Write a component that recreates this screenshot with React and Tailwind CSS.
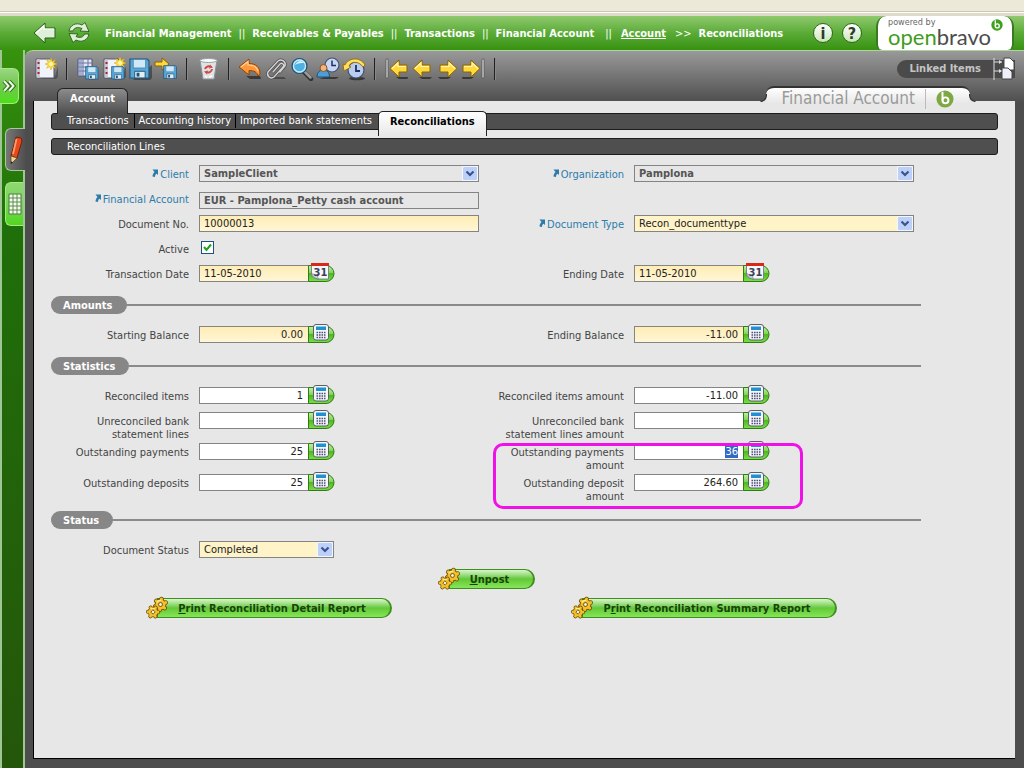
import { useEffect, useRef } from "react";

/* ---------- icons ---------- */

function Floppy({ x = 0, y = 0, s = 1 }) {
  return (
    <g transform={`translate(${x} ${y}) scale(${s})`}>
      <path d="M1 1h18l2 2v18H1z" fill="#58a8d8" stroke="#1f5680" strokeWidth="1.200" />
      <path d="M4.500 1.500h13v9h-13z" fill="#cfe8f7" stroke="#3d7ca6" strokeWidth="0.8" />
      <path d="M6 14h11v7H6z" fill="#e4edf2" stroke="#1f5680" />
      <path d="M8 15.500h3v4H8z" fill="#1f5680" />
    </g>
  );
}

function Sun({ x = 17, y = 7 }) {
  return (
    <g transform={`translate(${x} ${y})`} stroke="#d8a400" strokeWidth="0.5" fill="#ffe04a">
      <path d="M0-6 1.300-2.500 4.300-4.300 2.700-1.200 6 0 2.700 1.200 4.300 4.300 1.300 2.500 0 6-1.300 2.500-4.300 4.300-2.700 1.200-6 0-2.700-1.200-4.300-4.300-1.300-2.500z" />
      <circle r="2" fill="#fff6b0" stroke="none" />
    </g>
  );
}

function Sheet() {
  return (
    <g>
      <path d="M5 22h17l2-2V9l-3 10z" fill="#333" opacity="0.5" />
      <path d="M2 2h14l4 4v15H2z" fill="#f2f4fb" stroke="#555a68" />
      <path d="M4.500 2.500v18" stroke="#c6c9d6" strokeWidth="3" />
      <path d="M4.500 5v2M4.500 10v2M4.500 15v2" stroke="#b0202a" strokeWidth="2" />
    </g>
  );
}

function ArrowLeft({ x = 3 }) {
  return (
    <g transform={`translate(${x} 3)`}>
      <path d="M6 17h13l-2 2H9z" fill="#222" opacity="0.7" />
      <path
        d="M0 8.500 9 0v5h8v7H9v5z"
        fill="#ffd83a"
        stroke="#8d6200"
        strokeLinejoin="round"
      />
      <path d="M2 8.500l6-5.500v3.500h8" fill="none" stroke="#fff6b8" strokeWidth="1.200" />
    </g>
  );
}

const toolbarIcons = {
  new: (
    <>
      <Sheet />
      <Sun />
    </>
  ),
  saveGrid: (
    <>
      <path d="M2 2h14v17H2z" fill="#e3e6f2" stroke="#50577c" />
      <path d="M2 6h14M2 10h14M2 14h14M7 2v17M12 2v17" stroke="#6b73a0" />
      <path d="M2 2h4v17H2z" fill="#7f8ab8" opacity="0.6" />
      <Floppy x={9} y={9} s={0.62} />
    </>
  ),
  saveNew: (
    <>
      <Sheet />
      <Sun x={18} y={6} />
      <Floppy x={9} y={9} s={0.62} />
    </>
  ),
  save: (
    <>
      <path d="M5 23h17l2-2V8z" fill="#222" opacity="0.5" />
      <Floppy x={1} y={1} s={0.95} />
    </>
  ),
  saveNext: (
    <>
      <path d="M1 5h7V1l7 6-7 6V9H1z" fill="#ffd83a" stroke="#8d6200" />
      <Floppy x={9} y={8} s={0.64} />
    </>
  ),
  trash: (
    <>
      <path d="M4 3h17l-3 19H7z" fill="#dfe3e6" stroke="#8d9296" />
      <ellipse cx="12.500" cy="3.500" rx="8.500" ry="2" fill="#f8fafb" stroke="#9aa0a4" />
      <path d="M9 12a4 4 0 0 1 6-2M16 12a4 4 0 0 1-6 3" fill="none" stroke="#cf4b43" strokeWidth="2" />
      <path d="M14 7.500l3 3-4 1zM11 17.500l-3-3 4-1z" fill="#cf4b43" />
      <path d="M9 19l2 1.500M13 20l3-1" stroke="#fff" strokeWidth="1.500" />
    </>
  ),
  undo: (
    <>
      <path d="M8 19h14l1 3H12z" fill="#222" opacity="0.7" />
      <path
        d="M1 10 11 2v4.500c7 0 11 4 11 10l-2 2.500c-1-4-4-5.500-9-5.500V18z"
        fill="#ff9838"
        stroke="#9a4300"
        strokeLinejoin="round"
      />
      <path d="M3 10l7-5.500V8c5 0 9 2 10 6" fill="none" stroke="#ffd0a0" strokeWidth="1.200" />
    </>
  ),
  attach: (
    <>
      <path d="M6 20h14l2 2H10z" fill="#222" opacity="0.5" />
      <g fill="none" strokeLinecap="round">
        <path
          d="M9 15l7-8a2 2 0 0 1 3 3l-9 10a4 4 0 0 1-6-5L14 4a4.500 4.500 0 0 1 7 5l-5 6"
          stroke="#4a4a4a"
          strokeWidth="2.800"
        />
        <path
          d="M9 15l7-8a2 2 0 0 1 3 3l-9 10a4 4 0 0 1-6-5L14 4a4.500 4.500 0 0 1 7 5l-5 6"
          stroke="#d4d4d4"
          strokeWidth="1.400"
        />
      </g>
    </>
  ),
  search: (
    <>
      <path d="M14 15l7 7" stroke="#333" strokeWidth="4.500" strokeLinecap="round" />
      <path d="M14 14l6.500 6.500" stroke="#9b9b9b" strokeWidth="2.500" strokeLinecap="round" />
      <circle cx="9.500" cy="9" r="7.500" fill="#4fb0e2" stroke="#234f6c" strokeWidth="1.200" />
      <circle cx="9.500" cy="9" r="6" fill="none" stroke="#c9ebfb" strokeWidth="1.300" />
      <path d="M5 8c2-4 6-5 9-2-3 0-6 0-9 2z" fill="#e3f6ff" />
    </>
  ),
  audit: (
    <>
      <path d="M3 22h17l3-2H9z" fill="#222" opacity="0.7" />
      <circle cx="16" cy="8" r="7" fill="#c6d6f4" stroke="#41506e" strokeWidth="1.200" />
      <path d="M16 3.500V8.500h4" fill="none" stroke="#22305c" strokeWidth="1.500" />
      <path d="M1 20c0-5 3-7 6.500-7s6 2 6 7z" fill="#4c9fd4" stroke="#1c4f78" />
      <circle cx="7.500" cy="11" r="3.500" fill="#f0b47c" stroke="#8c5528" />
    </>
  ),
  history: (
    <>
      <ellipse cx="15" cy="21.500" rx="8" ry="1.800" fill="#222" opacity="0.7" />
      <circle cx="14" cy="13" r="8" fill="#b9cdf0" stroke="#41506e" strokeWidth="1.200" />
      <path d="M14 8v6h4" fill="none" stroke="#22305c" strokeWidth="1.800" />
      <path
        d="M1 7l2 1c3-7 15-9 20 0l-2 2C17 4 9 4 7 9l2 1-7 4z"
        fill="#ffdf5e"
        stroke="#8d6200"
        strokeWidth="0.8"
      />
    </>
  ),
  first: (
    <>
      <path d="M2 2h2v19H2z" fill="#ddd" stroke="#555" strokeWidth="0.8" />
      <ArrowLeft x={6} />
    </>
  ),
  prev: <ArrowLeft />,
  next: (
    <g transform="translate(24 0) scale(-1 1)">
      <ArrowLeft />
    </g>
  ),
  last: (
    <g transform="translate(24 0) scale(-1 1)">
      <path d="M2 2h2v19H2z" fill="#ddd" stroke="#555" strokeWidth="0.8" />
      <ArrowLeft x={6} />
    </g>
  ),
};

const toolbar = [
  ["new", "New"],
  null,
  ["saveGrid", "Save and view grid"],
  ["saveNew", "Save and new"],
  ["save", "Save"],
  ["saveNext", "Save and next"],
  null,
  ["trash", "Delete"],
  null,
  ["undo", "Undo"],
  ["attach", "Attachments"],
  ["search", "Search"],
  ["audit", "Audit trail"],
  ["history", "Refresh history"],
  null,
  ["first", "First record"],
  ["prev", "Previous record"],
  ["next", "Next record"],
  ["last", "Last record"],
  null,
];

function Badge({ className, color }) {
  return (
    <svg viewBox="0 0 20 20" className={className} aria-hidden="true">
      <circle cx="10" cy="10" r="9.500" fill={color} />
      <circle cx="10.500" cy="11.500" r="3.300" fill="none" stroke="#fff" strokeWidth="2.200" />
      <path d="M7.200 2v9.500" stroke="#fff" strokeWidth="2.200" />
    </svg>
  );
}

// One cog: dark outline first, gold body on top
function Cog({ x, y, s, turn }) {
  const teeth = "M0-5.700V5.700M-4.900-2.850 4.900 2.850M-4.900 2.850 4.900-2.850";
  return (
    <g transform={`translate(${x} ${y}) rotate(${turn}) scale(${s})`}>
      <circle r="5.900" fill="#6d4a00" />
      <path d={teeth} stroke="#6d4a00" strokeWidth="4.600" strokeLinecap="round" />
      <circle r="5.100" fill="#f2c02a" />
      <path d={teeth} stroke="#f2c02a" strokeWidth="3" strokeLinecap="round" />
      <path d="M-4-1.500A4.200 4.200 0 0 1 0-4.200" fill="none" stroke="#fff0a0" strokeWidth="1.200" />
      <circle r="2" fill="#f4f1e6" stroke="#6d4a00" strokeWidth="0.9" />
    </g>
  );
}

function Gears() {
  return (
    <svg viewBox="0 0 24 24" className="relative z-10 h-6 w-6 shrink-0" aria-hidden="true">
      <Cog x={15.5} y={8.5} s={0.98} turn={10} />
      <Cog x={8} y={16} s={0.88} turn={32} />
    </svg>
  );
}

function FieldPlate({ children }) {
  return (
    <svg viewBox="0 0 27 21" className="h-[21px] w-[27px]" aria-hidden="true">
      <defs>
        <linearGradient id="plate" x1="0" y1="0" x2="0" y2="1">
          <stop offset="0" stopColor="#c4efad" />
          <stop offset="0.45" stopColor="#7fd455" />
          <stop offset="0.5" stopColor="#4fb71f" />
          <stop offset="1" stopColor="#7be04a" />
        </linearGradient>
      </defs>
      <path
        d="M.5 3.500H18a8 8 0 0 1 0 16H.5z"
        fill="url(#plate)"
        stroke="#2f7d12"
      />
      {children}
    </svg>
  );
}

function CalcIcon() {
  return (
    <FieldPlate>
      <rect x="5.500" y="1.500" width="15" height="15.500" rx="2.500" fill="#f5f6fa" stroke="#5b5f66" />
      <path d="M8 3.500h10V7H8z" fill="#2090d0" />
      <path d="M8.500 9.500h9M8.500 12h9M8.500 14.500h9" stroke="#4d4f78" strokeWidth="1.400" strokeDasharray="1.600 0.900" />
    </FieldPlate>
  );
}

function CalendarIcon() {
  return (
    <FieldPlate>
      <path d="M3.500 3h17v14h-11c-4-1-6-3-6-5z" fill="#f7f7fb" stroke="#6a6f80" strokeWidth="0.8" />
      <path d="M3 1h18v3H3z" fill="#d8281a" />
      <path d="M3.500 11c0 3 3 5.500 7 6-1-2-1-3-1-4-3 0-5-1-6-2z" fill="#c5cbe0" stroke="#6a6f80" strokeWidth="0.6" />
      <text x="12.500" y="14" textAnchor="middle" fontFamily="DejaVu Sans Condensed, sans-serif" fontSize="11" fontWeight="bold" fill="#3b3f55">
        31
      </text>
    </FieldPlate>
  );
}

/* ---------- form parts ---------- */

function Row({ id, label, link, tall, children }) {
  return (
    <div className={`flex items-start gap-[10px] ${tall ? "min-h-[31px]" : "min-h-[25px]"}`}>
      <div className="w-[138px] shrink-0 pt-[5px] text-right leading-[13px] text-[#444]">
        {link ? (
          <a href="#" className="inline-flex items-start gap-px align-top text-[#2b7cab]">
            <svg viewBox="0 0 8 8" className="mt-px h-2 w-2" aria-hidden="true">
              <path d="M1.500 0.500H7V6L5.500 4.800C4.500 5.500 4 6.500 4 8L1.500 7.500C1.500 5.500 2.500 4 3.500 3z" fill="#2b7cab" />
            </svg>
            <label htmlFor={id}>{label}</label>
          </a>
        ) : (
          <label htmlFor={id} className="block">{label}</label>
        )}
      </div>
      <div className="min-w-0 flex-1 pt-[2px]">{children}</div>
    </div>
  );
}

function Select({ id, value, locked, small }) {
  return (
    <div className={`relative ${small ? "w-[135px]" : "w-full max-w-[280px]"}`}>
      <select
        id={id}
        defaultValue={value}
        className={`block h-[17px] w-full appearance-none border border-[#848484] px-1 leading-[15px] ${
          locked ? "bg-[#e6e6e6] font-bold text-[#555]" : "bg-[#fff3c8] text-[#222]"
        }`}
      >
        <option>{value}</option>
      </select>
      <svg viewBox="0 0 16 15" className="pointer-events-none absolute top-px right-px h-[15px] w-4" aria-hidden="true">
        <rect width="16" height="15" rx="1" fill="#f3f6ff" />
        <rect x="1" y="1" width="14" height="13" rx="1" fill="#bdd0fa" />
        <path d="M4.500 5.500 8 9 11.500 5.500" fill="none" stroke="#3a5488" strokeWidth="2.200" />
      </svg>
    </div>
  );
}

function PickField({ id, label, value, kind = "calc", required, inputRef }) {
  return (
    <div className="flex items-start">
      <input
        id={id}
        ref={inputRef}
        defaultValue={value}
        className={`h-[17px] w-[110px] border border-[#848484] text-[#222] outline-none selection:bg-[#316ac5] selection:text-white ${
          kind === "calc" ? "pr-[5px] text-right" : "pl-1"
        } ${required ? "bg-gradient-to-b from-[#ffedb5] to-[#fff6d6]" : "bg-white"}`}
      />
      <button type="button" aria-label={`${label} picker`} className="-mt-[3px] -ml-px shrink-0">
        {kind === "calc" ? <CalcIcon /> : <CalendarIcon />}
      </button>
    </div>
  );
}

function PickRow({ id, label, tall, ...rest }) {
  return (
    <Row id={id} label={label} tall={tall}>
      <PickField id={id} label={label} {...rest} />
    </Row>
  );
}

function Section({ title }) {
  return (
    <div className="mt-2 mb-[10px] flex items-center">
      <h2 className="h-[18px] rounded-full bg-[#878787] pr-[14px] pl-3 leading-[19px] font-bold text-white">
        {title}
      </h2>
      <div className="h-0.5 flex-1 bg-[#8b8b8b]" />
    </div>
  );
}

function GearButton({ children }) {
  return (
    <button type="button" className="flex items-center font-bold text-[#17430a]">
      <Gears />
      <span className="-ml-3 h-5 rounded-r-full border border-r-2 border-[#3f8f1e] bg-gradient-to-b from-[#d9f5c8] via-[#62c936] via-50% to-[#86e558] pr-6 pl-5 leading-5">
        {children}
      </span>
    </button>
  );
}

/* ---------- page chrome ---------- */

function Header() {
  const sep = <span className="font-normal">||</span>;
  return (
    <header className="flex h-[34px] items-center bg-gradient-to-b from-[#8fc96d] via-[#5aab36] to-[#37920d] pr-[10px] pl-[33px]">
      <button type="button" aria-label="Back">
        <svg viewBox="0 0 24 22" className="h-[22px] w-6">
          <path d="M1 11 12 1v5h10v10H12v5z" fill="#dff0d8" stroke="#2d5c1c" strokeLinejoin="round" />
          <path d="M3 11l8-7v3h10" fill="none" stroke="#fff" strokeWidth="1.200" />
        </svg>
      </button>
      <button type="button" aria-label="Refresh" className="ml-[11px]">
        <svg viewBox="0 0 22 22" className="h-[22px] w-[22px]">
          <g fill="#dff0d8" stroke="#2d5c1c" strokeWidth="0.9" strokeLinejoin="round">
            <path d="M1 9C2 3 8 0 14 3l3-2.500 4 9-9-.5 2-2.500C9 4.500 6 6 5 9z" />
            <path d="M21 12c-1 6-7 9-13 6l-3 2.500-4-9 9 .5-2 2.500c4.500 2 7.500.5 8.500-2.500z" />
          </g>
        </svg>
      </button>
      <nav className="ml-[15px] flex flex-1 items-center gap-[7px] pt-[2px] font-bold whitespace-nowrap text-white">
        <span>Financial Management</span>
        {sep}
        <span>Receivables &amp; Payables</span>
        {sep}
        <span>Transactions</span>
        {sep}
        <span>Financial Account</span>
        <span className="ml-1 font-normal">||</span>
        <a href="#" className="mx-[2px] underline">Account</a>
        <span className="font-normal">&gt;&gt;</span>
        <span>Reconciliations</span>
      </nav>
      <div className="mr-[14px] flex gap-[9px]">
        {["i", "?"].map((glyph) => (
          <button
            key={glyph}
            type="button"
            aria-label={glyph === "i" ? "About" : "Help"}
            className="h-5 w-5 rounded-full border border-[#2d6b17] bg-gradient-to-b from-white to-[#c9e6bb] text-base leading-[17px] font-bold text-[#2f3a2b]"
          >
            {glyph}
          </button>
        ))}
      </div>
      <div className="relative h-full w-[138px] rounded-t-[10px] rounded-b-md border-x-2 border-[#3c7a22] bg-white pl-[10px]">
        <div className="pt-px text-[9px] leading-[11px] text-[#666]">powered by</div>
        <div className="font-['Lato',sans-serif] text-[22px] leading-[17px] text-[#4c4c4c]">
          <span className="text-[#3f9c1c]">open</span>bravo
        </div>
        <Badge className="absolute top-[3px] right-[9px] h-3 w-3" color="#3fa01c" />
      </div>
    </header>
  );
}

function Sidebar() {
  return (
    <aside className="flex w-[25px] shrink-0 flex-col bg-gradient-to-b from-[#37920d] via-[#1f6f0a] via-25% to-[#24560a]">
      <div className="flex flex-1 flex-col items-end border-x-2 border-[#9fc795] pt-[18px]">
        <button
          type="button"
          aria-label="Open menu"
          className="-ml-[2px] flex h-9 w-[19px] items-center justify-center self-start rounded-r-md border border-l-0 border-[#a5ec80] bg-gradient-to-b from-[#9ad682] via-[#6fc64a] to-[#4be00f]"
        >
          <svg viewBox="0 0 14 14" className="h-[14px] w-[14px]">
            <path d="M2 2l4.500 5L2 12M7 2l4.500 5L7 12" fill="none" stroke="#2d6b17" strokeWidth="4" />
            <path d="M2 2l4.500 5L2 12M7 2l4.500 5L7 12" fill="none" stroke="#eefbe6" strokeWidth="2" />
          </svg>
        </button>
        <button
          type="button"
          aria-label="Edit form"
          className="-mr-[2px] mt-6 flex h-[43px] w-5 items-center justify-center rounded-l-md border border-r-0 border-[#a9c9a0] bg-gradient-to-r from-[#777] to-[#505050]"
        >
          <svg viewBox="0 0 16 32" className="h-8 w-4">
            <path d="M8 3l5 1 1 3-5 17-6-2z" fill="#e64a1c" stroke="#7a1d05" />
            <path d="M8.500 5 5 20" stroke="#ff9c6e" strokeWidth="1.800" />
            <path d="M3 22l6 2-6 6z" fill="#ecd39a" stroke="#5d4213" strokeWidth="0.7" />
            <path d="M2.800 27.500 5 28 3 30z" fill="#222" />
          </svg>
        </button>
        <button
          type="button"
          aria-label="Grid view"
          className="mt-[11px] flex h-[44px] w-[18px] items-center justify-center rounded-l-md border border-r-0 border-[#a5ec80] bg-gradient-to-b from-[#8fd873] to-[#52d61c]"
        >
          <svg viewBox="0 0 14 22" className="h-[22px] w-[14px]">
            <path d="M1 1h12v20H1z" fill="#f4faf0" stroke="#4c7a3a" />
            <path d="M1 5h12M1 9h12M1 13h12M1 17h12M5 1v20M9 1v20" stroke="#5f8a4e" />
          </svg>
        </button>
      </div>
    </aside>
  );
}

function Toolbar() {
  return (
    <div className="flex h-[35px] items-center">
      {toolbar.map((item, i) =>
        item ? (
          <button key={item[0]} type="button" aria-label={item[1]} className="flex w-[26px] justify-center">
            <svg viewBox="0 0 24 24" className="h-6 w-6">{toolbarIcons[item[0]]}</svg>
          </button>
        ) : (
          <div key={i} className="mx-[7px] h-[22px] w-0.5 border-r border-[#888] bg-[#222]" />
        )
      )}
      <a
        href="#"
        className="ml-auto flex h-[18px] items-center rounded-l-full bg-[#4a4a4a] pl-3 font-bold text-[#c4c4c4]"
      >
        <span className="pt-px pr-3">Linked Items</span>
        <svg viewBox="0 0 22 24" className="h-6 w-[22px]" aria-hidden="true">
          <path d="M1 1v22M1 5h8M1 14h8" fill="none" stroke="#ddd" />
          <path d="M6 3l3 2-3 2zM6 12l3 2-3 2z" fill="#ddd" />
          <path d="M11 1h6l4 4v8H11z" fill="#fff" stroke="#444" />
          <path d="M9 11h6l4 4v7H9z" fill="#eef1f8" stroke="#444" />
        </svg>
      </a>
    </div>
  );
}

// Concave foot where the title tab meets the page
function TabFoot({ className }) {
  return (
    <svg viewBox="0 0 8 8" className={className} aria-hidden="true">
      <path d="M8 0c0 5-3 8-8 8h8z" fill="#e7e7e7" />
      <path d="M7.500 0c0 4-2 7-6 7.500" fill="none" stroke="#333" strokeWidth="1.200" />
    </svg>
  );
}

export default function App() {
  const amountRef = useRef(null);

  // The outstanding amount is active and selected on load
  useEffect(() => {
    amountRef.current.focus();
    amountRef.current.select();
  }, []);

  return (
    <div className="flex min-h-screen flex-col bg-[#4d4d4d] font-['DejaVu_Sans_Condensed','DejaVu_Sans',sans-serif] text-[11px]">
      <div className="flex h-4 flex-col justify-end bg-[#ece9d8]">
        <div className="h-px bg-[#cbc7b4]" />
        <div className="h-px bg-white" />
        <div className="h-[3px] bg-[#dedbca]" />
      </div>
      <Header />
      <div className="flex flex-1 bg-[#37920d]">
        <Sidebar />
        <main className="flex min-w-0 flex-1 flex-col rounded-tl-lg border-t border-[#a9d69a] bg-[#505050] bg-[linear-gradient(#999,#4d4d4d_52px)] pr-[9px] pb-[9px] pl-2">
          <Toolbar />
          <div className="relative z-10 flex h-[15px] items-start justify-between">
            <div className="mt-[2px] ml-6 h-[26px] rounded-t-md border border-b-0 border-[#222] bg-gradient-to-b from-[#8c8c8c] to-[#4f4f4f] px-3 leading-[20px] font-bold text-white">
              Account
            </div>
            <div className="relative mr-[45px] flex h-6 items-center rounded-t-lg border-t-2 border-[#333] bg-gradient-to-b from-white to-[#e7e7e7] to-70% px-4 text-[17px] text-[#9a9a9a]">
              <TabFoot className="absolute top-[6px] -left-[7px] h-2 w-2" />
              Financial Account
              <span className="mx-[10px] h-5 w-px bg-[#bbb]" />
              <Badge className="h-[18px] w-[18px]" color="#7da844" />
              <TabFoot className="absolute top-[6px] -right-[7px] h-2 w-2 -scale-x-100" />
            </div>
          </div>
          <div className="flex-1 border-b border-l border-black bg-[#e7e7e7] px-[17px] pt-3">
            <nav className="flex h-[17px] items-start rounded-[3px] border border-[#1c1c1c] bg-[#4f4f4f] pl-[15px] leading-[14px] whitespace-nowrap text-white">
              <a href="#" className="border-r border-black pr-[5px]">Transactions</a>
              <a href="#" className="border-r border-black px-1">Accounting history</a>
              <a href="#" className="px-1">Imported bank statements</a>
              <a
                href="#"
                className="relative z-10 -mt-[3px] ml-[2px] h-[25px] rounded-t-[5px] border border-b-0 border-[#222] bg-gradient-to-b from-white to-[#e7e7e7] px-[11px] leading-[20px] font-bold text-black"
              >
                Reconciliations
              </a>
            </nav>
            <h1 className="mt-2 h-[17px] rounded-[3px] border border-[#1c1c1c] bg-[#4f4f4f] pl-[15px] leading-[16px] text-white">
              Reconciliation Lines
            </h1>

            <form className="mt-2 w-full max-w-[870px]" onSubmit={(e) => e.preventDefault()}>
              <div className="grid grid-cols-2">
                <Row id="client" label="Client" link>
                  <Select id="client" value="SampleClient" locked />
                </Row>
                <Row id="org" label="Organization" link>
                  <Select id="org" value="Pamplona" locked />
                </Row>
                <div className="col-span-2 grid grid-cols-2">
                  <Row id="account" label="Financial Account" link>
                    <input
                      id="account"
                      readOnly
                      defaultValue="EUR - Pamplona_Petty cash account"
                      className="mt-[2px] block h-[17px] w-full max-w-[280px] border border-[#848484] bg-[#e6e6e6] px-1 font-bold text-[#555]"
                    />
                  </Row>
                </div>
                <Row id="docno" label="Document No.">
                  <input
                    id="docno"
                    defaultValue="10000013"
                    className="block h-[17px] w-full max-w-[280px] border border-[#848484] bg-gradient-to-b from-[#ffedb5] to-[#fff6d6] px-1 text-[#222]"
                  />
                </Row>
                <Row id="doctype" label="Document Type" link>
                  <Select id="doctype" value="Recon_documenttype" />
                </Row>
                <div className="col-span-2 grid grid-cols-2">
                  <Row id="active" label="Active">
                    <div className="relative mt-px ml-[2px] h-[13px] w-[13px]">
                      <input
                        id="active"
                        type="checkbox"
                        defaultChecked
                        className="peer block h-[13px] w-[13px] appearance-none border border-[#1c5180] bg-white"
                      />
                      <svg viewBox="0 0 13 13" className="pointer-events-none absolute inset-0 hidden h-[13px] w-[13px] peer-checked:block">
                        <path d="M3 6l2.500 3L10 3.500" fill="none" stroke="#21a121" strokeWidth="2" />
                      </svg>
                    </div>
                  </Row>
                </div>
                <PickRow id="tdate" label="Transaction Date" value="11-05-2010" kind="date" required />
                <PickRow id="edate" label="Ending Date" value="11-05-2010" kind="date" required />
              </div>

              <Section title="Amounts" />
              <div className="grid grid-cols-2">
                <PickRow id="start" label="Starting Balance" value="0.00" required />
                <PickRow id="end" label="Ending Balance" value="-11.00" required />
              </div>

              <Section title="Statistics" />
              <div className="grid grid-cols-2">
                <div>
                  <PickRow id="rec" label="Reconciled items" value="1" />
                  <PickRow id="unrec" label="Unreconciled bank statement lines" value="" tall />
                  <PickRow id="pay" label="Outstanding payments" value="25" tall />
                  <PickRow id="dep" label="Outstanding deposits" value="25" tall />
                </div>
                <div>
                  <PickRow id="recAmt" label="Reconciled items amount" value="-11.00" />
                  <PickRow id="unrecAmt" label="Unreconciled bank statement lines amount" value="" tall />
                  <div className="relative">
                    <PickRow id="payAmt" label="Outstanding payments amount" value="36" inputRef={amountRef} tall />
                    <PickRow id="depAmt" label="Outstanding deposit amount" value="264.60" tall />
                    <div className="pointer-events-none absolute top-[2px] right-[118px] -bottom-[6px] left-[7px] rounded-[10px] border-[3px] border-[#f010e8]" />
                  </div>
                </div>
              </div>

              <Section title="Status" />
              <div className="grid grid-cols-2">
                <Row id="status" label="Document Status">
                  <Select id="status" value="Completed" small />
                </Row>
              </div>

              <div className="mt-[3px] flex justify-center">
                <GearButton>
                  <u>U</u>npost
                </GearButton>
              </div>
              <div className="mt-[5px] grid grid-cols-2 justify-items-center">
                <GearButton>
                  <u>P</u>rint Reconciliation Detail Report
                </GearButton>
                <GearButton>
                  P<u>r</u>int Reconciliation Summary Report
                </GearButton>
              </div>
            </form>
          </div>
        </main>
      </div>
    </div>
  );
}
